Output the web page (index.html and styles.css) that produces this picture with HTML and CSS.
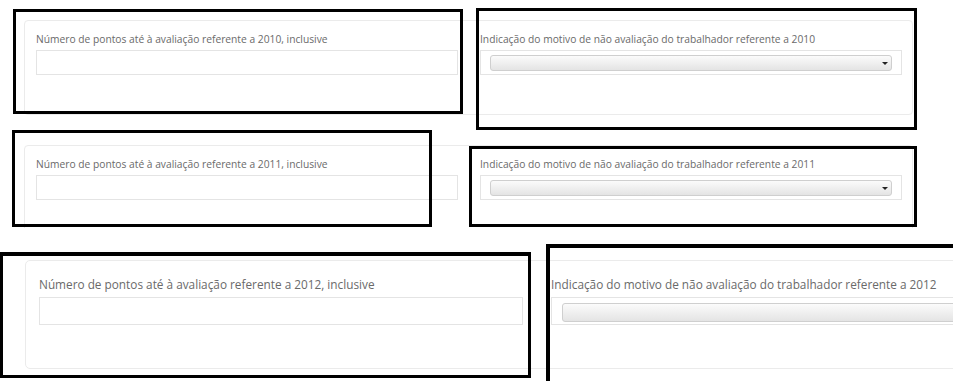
FILE: index.html
```html
<!DOCTYPE html>
<html lang="pt">
<head>
<meta charset="utf-8">
<title>Avaliação</title>
<link rel="stylesheet" href="styles.css">
</head>
<body>
<div class="canvas">
  <section class="shot shot-1">
    <div class="panel">
      <div class="col">
        <label class="lbl">Número de pontos até à avaliação referente a 2010, inclusive</label>
        <div class="input"></div>
      </div>
      <div class="col">
        <label class="lbl">Indicação do motivo de não avaliação do trabalhador referente a 2010</label>
        <div class="field"><div class="select"><span class="caret"></span></div></div>
      </div>
    </div>
    <div class="mark mark-1"></div>
    <div class="mark mark-2"></div>
  </section>

  <section class="shot shot-2">
    <div class="panel">
      <div class="col">
        <label class="lbl">Número de pontos até à avaliação referente a 2011, inclusive</label>
        <div class="input"></div>
      </div>
      <div class="col">
        <label class="lbl">Indicação do motivo de não avaliação do trabalhador referente a 2011</label>
        <div class="field"><div class="select"><span class="caret"></span></div></div>
      </div>
    </div>
    <div class="mark mark-3"></div>
    <div class="mark mark-4"></div>
  </section>

  <section class="shot shot-3">
    <div class="panel">
      <div class="col">
        <label class="lbl">Número de pontos até à avaliação referente a 2012, inclusive</label>
        <div class="input"></div>
      </div>
      <div class="col">
        <label class="lbl">Indicação do motivo de não avaliação do trabalhador referente a 2012</label>
        <div class="field"><div class="select"><span class="caret"></span></div></div>
      </div>
    </div>
    <div class="mark mark-5"></div>
    <div class="mark mark-6"></div>
  </section>
</div>
</body>
</html>
```

FILE: styles.css
```css
html, body {
  margin: 0;
  padding: 0;
  background: #ffffff;
  overflow: hidden;
}

.canvas {
  width: 953px;
  height: 381px;
  overflow: hidden;
  font-family: "Open Sans", "Liberation Sans", sans-serif;
  color: #6a6a6a;
}

.shot {
  position: relative;
  box-sizing: border-box;
}

.shot-1 { height: 125px; padding: 20px 0 0 24px; }
.shot-2 { height: 103px; padding: 20px 0 0 24px; overflow: hidden; }
.shot-3 { height: 153px; padding: 32px 0 0 25px; overflow: hidden; }

.panel {
  box-sizing: border-box;
  display: flex;
  border: 1px solid #ebebeb;
  border-radius: 4px;
  background: #fff;
}

.shot-1 .panel,
.shot-2 .panel {
  width: 889px;
  height: 95px;
  padding: 11px 10px 0 11px;
  gap: 22px;
}

.shot-3 .panel {
  width: 1040px;
  height: 109px;
  padding: 15px 0 0 13px;
  gap: 28px;
  border-radius: 5px;
}

.col {
  display: flex;
  flex-direction: column;
}

.shot-1 .col, .shot-2 .col { width: 422px; }
.shot-3 .col { width: 484px; flex-shrink: 0; }

.lbl {
  display: block;
  white-space: nowrap;
}

.shot-1 .lbl, .shot-2 .lbl {
  font-size: 10.25px;
  line-height: 14px;
  margin-bottom: 4px;
}

.shot-3 .lbl {
  font-size: 11.8px;
  line-height: 17px;
  margin-bottom: 4px;
}

.input, .field {
  box-sizing: border-box;
  border: 1px solid #e4e4e4;
  background: #fff;
}

.shot-1 .input, .shot-2 .input,
.shot-1 .field, .shot-2 .field { height: 25px; }

.shot-3 .input, .shot-3 .field { height: 28px; }

.field { padding: 4px 9px; }
.shot-3 .field { padding: 5px 10px; }

.select {
  box-sizing: border-box;
  height: 16px;
  display: flex;
  align-items: center;
  justify-content: flex-end;
  padding-right: 3px;
  border: 1px solid #cfcfcf;
  border-radius: 3px;
  background: linear-gradient(#fbfbfb, #e4e4e4);
}

.shot-3 .select { height: 19px; }

.caret {
  width: 0;
  height: 0;
  border-left: 3px solid transparent;
  border-right: 3px solid transparent;
  border-top: 3px solid #222;
}

.mark {
  position: absolute;
  box-sizing: border-box;
  border: 3px solid #000;
}

.mark-1 { left: 13px; top: 9px; width: 450px; height: 105px; }
.mark-2 { left: 476px; top: 8px; width: 441px; height: 122px; }
.mark-3 { left: 12px; top: 5px; width: 420px; height: 97px; }
.mark-4 { left: 469px; top: 21px; width: 448px; height: 81px; }
.mark-5 { left: 0; top: 24px; width: 531px; height: 126px; border-width: 4px 3px 3px 3px; }
.mark-6 { left: 546px; top: 16px; width: 430px; height: 160px; border-width: 4px; }
```
